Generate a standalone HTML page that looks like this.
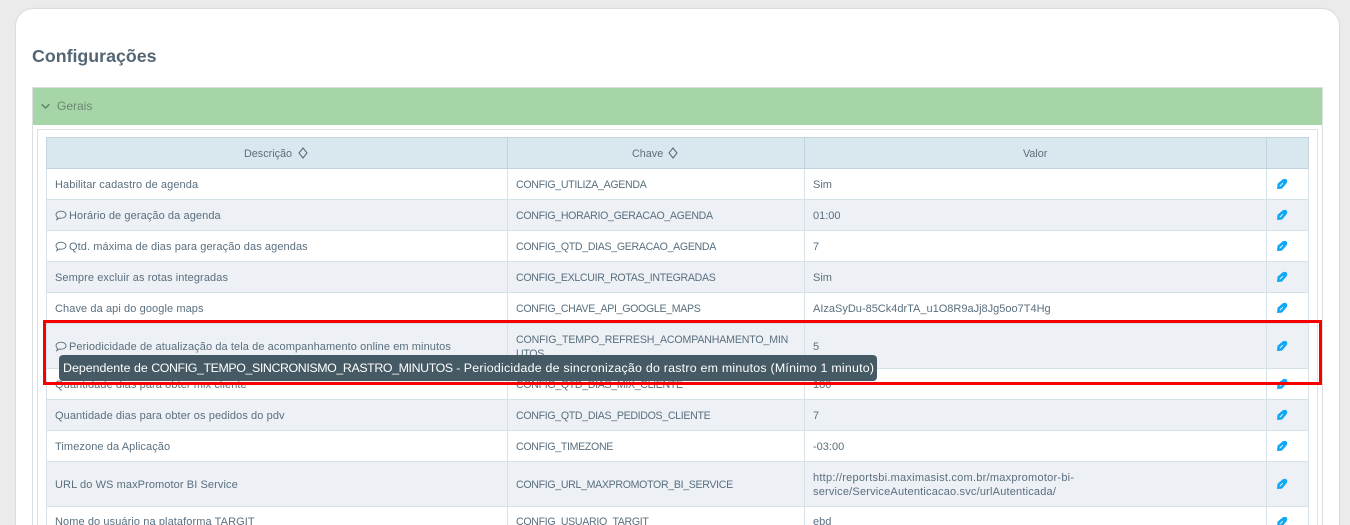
<!DOCTYPE html>
<html lang="pt-BR">
<head>
<meta charset="utf-8">
<title>Configurações</title>
<style>
html,body{margin:0;padding:0;width:1350px;height:525px;overflow:hidden;background:#ebebeb;font-family:"Liberation Sans",sans-serif;}
*{box-sizing:border-box}
#wrap{position:relative;width:1350px;height:525px;overflow:hidden;background:#ebebeb}
.card,.panel,.green,.frame,.row,.c,.red,.tip,h1{position:absolute}
.card{left:16px;top:9px;width:1323px;height:540px;background:#fff;border-radius:17px;box-shadow:0 0 2px rgba(0,0,0,.18)}
h1{left:32px;top:44px;margin:0;font-size:17.8px;line-height:25px;font-weight:700;color:#546673;white-space:nowrap}
.panel{left:32px;top:87px;width:1291px;height:460px;border:1px solid #dcdfe0;background:#fff}
.green{left:33px;top:88px;width:1289px;height:37px;background:#a6d6a7}
.green span{position:absolute;left:24px;top:10px;font-size:12px;line-height:17px;color:#6b8672}
.frame{left:37px;top:129px;width:1281px;height:420px;border:1px solid #dfe2e3;background:#fff}
.row{left:46px;width:1263px;border-left:1px solid #d6e1e8;border-right:1px solid #d6e1e8;border-bottom:1px solid #d6e1e8;background:#fff;font-size:11px;color:#5a6f7e}
.row.e{background:#edf0f5}
.row.h{background:#d9e8ef;border:1px solid #bfd5dd;color:#5d6f7c}
.row i{position:absolute;top:0;bottom:-1px;width:1px;background:#d6e1e8}
.row.h i{background:#bfd5dd;top:-1px}
.i1{left:460px}.i2{left:757px}.i3{left:1219px}
.c{white-space:nowrap;line-height:14px;margin-top:1px}
.n{letter-spacing:.09px}
.d{left:8px;letter-spacing:.09px}.k{left:469px;font-size:10.6px;letter-spacing:-.32px}.v{left:766px}
.bub{position:absolute;left:8px;width:12px;height:11px}
.pen{position:absolute;left:1229px;width:12px;height:12px}
.red{left:43px;top:320px;width:1279px;height:65px;border:3px solid #f60000;z-index:5}
.tip{left:59px;top:355px;width:818px;height:26px;background:#455a64;border-radius:4px;z-index:6;color:#fff;font-size:12.4px;line-height:26px;padding-left:4px;white-space:nowrap}
</style>
</head>
<body>
<div id="wrap">
<div class="card"></div>
<h1>Configurações</h1>
<div class="panel"></div>
<div class="green">
<svg style="position:absolute;left:8px;top:15px" width="9" height="7" viewBox="0 0 9 7"><path d="M.7 1.2 4.5 5 8.3 1.2" fill="none" stroke="#5d7f65" stroke-width="1.4"/></svg>
<span>Gerais</span>
</div>
<div class="frame"></div>

<div class="row h" style="top:137px;height:32px">
<i class="i1"></i><i class="i2"></i><i class="i3"></i>
<span class="c" style="left:197px;top:8px;font-size:10.8px">Descrição</span>
<svg style="position:absolute;left:251px;top:9px" width="10" height="12" viewBox="0 0 10 12"><path d="M5 1 9 6 5 11 1 6Z" fill="none" stroke="#5d6f7c" stroke-width="1.1"/></svg>
<span class="c" style="left:585px;top:8px;font-size:10.8px">Chave</span>
<svg style="position:absolute;left:621px;top:9px" width="10" height="12" viewBox="0 0 10 12"><path d="M5 1 9 6 5 11 1 6Z" fill="none" stroke="#5d6f7c" stroke-width="1.1"/></svg>
<span class="c" style="left:976px;top:8px;font-size:10.8px">Valor</span>
</div>

<div class="row" style="top:169px;height:31px"><i class="i1"></i><i class="i2"></i><i class="i3"></i>
<span class="c d" style="top:8px">Habilitar cadastro de agenda</span><span class="c k" style="top:8px">CONFIG_UTILIZA_AGENDA</span><span class="c v" style="top:8px">Sim</span>
<svg class="pen" style="top:9px" viewBox="0 0 12 12"><path d="M1 11 1.500 5.800 6.500 1.500C8 .5 10 .7 10.800 1.600 11.600 2.600 11.400 4.400 10.400 5.500L6 10.600Z" fill="#11a8f5"/><path d="M3.800 8.200 6.800 5.200" stroke="#fff" stroke-width=".8"/></svg></div>

<div class="row e" style="top:200px;height:31px"><i class="i1"></i><i class="i2"></i><i class="i3"></i>
<svg class="bub" style="top:10px" viewBox="0 0 12 11"><path d="M6 1.200C8.800 1.200 11 2.700 11 4.700S8.800 8.200 6 8.200C5.400 8.200 4.800 8.100 4.300 8L1.800 9.700 2.500 7.300C1.600 6.600 1 5.700 1 4.700 1 2.700 3.200 1.200 6 1.200Z" fill="none" stroke="#5a6f7e" stroke-width=".9"/></svg>
<span class="c n" style="left:22px;top:8px">Horário de geração da agenda</span><span class="c k" style="top:8px">CONFIG_HORARIO_GERACAO_AGENDA</span><span class="c v" style="top:8px">01:00</span>
<svg class="pen" style="top:9px" viewBox="0 0 12 12"><path d="M1 11 1.500 5.800 6.500 1.500C8 .5 10 .7 10.800 1.600 11.600 2.600 11.400 4.400 10.400 5.500L6 10.600Z" fill="#11a8f5"/><path d="M3.800 8.200 6.800 5.200" stroke="#fff" stroke-width=".8"/></svg></div>

<div class="row" style="top:231px;height:31px"><i class="i1"></i><i class="i2"></i><i class="i3"></i>
<svg class="bub" style="top:10px" viewBox="0 0 12 11"><path d="M6 1.200C8.800 1.200 11 2.700 11 4.700S8.800 8.200 6 8.200C5.400 8.200 4.800 8.100 4.300 8L1.800 9.700 2.500 7.300C1.600 6.600 1 5.700 1 4.700 1 2.700 3.200 1.200 6 1.200Z" fill="none" stroke="#5a6f7e" stroke-width=".9"/></svg>
<span class="c n" style="left:22px;top:8px">Qtd. máxima de dias para geração das agendas</span><span class="c k" style="top:8px">CONFIG_QTD_DIAS_GERACAO_AGENDA</span><span class="c v" style="top:8px">7</span>
<svg class="pen" style="top:9px" viewBox="0 0 12 12"><path d="M1 11 1.500 5.800 6.500 1.500C8 .5 10 .7 10.800 1.600 11.600 2.600 11.400 4.400 10.400 5.500L6 10.600Z" fill="#11a8f5"/><path d="M3.800 8.200 6.800 5.200" stroke="#fff" stroke-width=".8"/></svg></div>

<div class="row e" style="top:262px;height:31px"><i class="i1"></i><i class="i2"></i><i class="i3"></i>
<span class="c d" style="top:8px">Sempre excluir as rotas integradas</span><span class="c k" style="top:8px">CONFIG_EXLCUIR_ROTAS_INTEGRADAS</span><span class="c v" style="top:8px">Sim</span>
<svg class="pen" style="top:9px" viewBox="0 0 12 12"><path d="M1 11 1.500 5.800 6.500 1.500C8 .5 10 .7 10.800 1.600 11.600 2.600 11.400 4.400 10.400 5.500L6 10.600Z" fill="#11a8f5"/><path d="M3.800 8.200 6.800 5.200" stroke="#fff" stroke-width=".8"/></svg></div>

<div class="row" style="top:293px;height:31px"><i class="i1"></i><i class="i2"></i><i class="i3"></i>
<span class="c d" style="top:8px">Chave da api do google maps</span><span class="c k" style="top:8px">CONFIG_CHAVE_API_GOOGLE_MAPS</span><span class="c v" style="top:8px">AIzaSyDu-85Ck4drTA_u1O8R9aJj8Jg5oo7T4Hg</span>
<svg class="pen" style="top:9px" viewBox="0 0 12 12"><path d="M1 11 1.500 5.800 6.500 1.500C8 .5 10 .7 10.800 1.600 11.600 2.600 11.400 4.400 10.400 5.500L6 10.600Z" fill="#11a8f5"/><path d="M3.800 8.200 6.800 5.200" stroke="#fff" stroke-width=".8"/></svg></div>

<div class="row e" style="top:324px;height:45px"><i class="i1"></i><i class="i2"></i><i class="i3"></i>
<svg class="bub" style="top:17px" viewBox="0 0 12 11"><path d="M6 1.200C8.800 1.200 11 2.700 11 4.700S8.800 8.200 6 8.200C5.400 8.200 4.800 8.100 4.300 8L1.800 9.700 2.500 7.300C1.600 6.600 1 5.700 1 4.700 1 2.700 3.200 1.200 6 1.200Z" fill="none" stroke="#5a6f7e" stroke-width=".9"/></svg>
<span class="c n" style="left:22px;top:15px">Periodicidade de atualização da tela de acompanhamento online em minutos</span>
<span class="c k" style="top:8px;letter-spacing:-.15px">CONFIG_TEMPO_REFRESH_ACOMPANHAMENTO_MIN</span><span class="c k" style="top:22px">UTOS</span><span class="c v" style="top:15px">5</span>
<svg class="pen" style="top:16px" viewBox="0 0 12 12"><path d="M1 11 1.500 5.800 6.500 1.500C8 .5 10 .7 10.800 1.600 11.600 2.600 11.400 4.400 10.400 5.500L6 10.600Z" fill="#11a8f5"/><path d="M3.800 8.200 6.800 5.200" stroke="#fff" stroke-width=".8"/></svg></div>

<div class="row" style="top:369px;height:31px"><i class="i1"></i><i class="i2"></i><i class="i3"></i>
<span class="c d" style="top:8px">Quantidade dias para obter mix cliente</span><span class="c k" style="top:8px">CONFIG_QTD_DIAS_MIX_CLIENTE</span><span class="c v" style="top:8px">180</span>
<svg class="pen" style="top:9px" viewBox="0 0 12 12"><path d="M1 11 1.500 5.800 6.500 1.500C8 .5 10 .7 10.800 1.600 11.600 2.600 11.400 4.400 10.400 5.500L6 10.600Z" fill="#11a8f5"/><path d="M3.800 8.200 6.800 5.200" stroke="#fff" stroke-width=".8"/></svg></div>

<div class="row e" style="top:400px;height:31px"><i class="i1"></i><i class="i2"></i><i class="i3"></i>
<span class="c d" style="top:8px">Quantidade dias para obter os pedidos do pdv</span><span class="c k" style="top:8px">CONFIG_QTD_DIAS_PEDIDOS_CLIENTE</span><span class="c v" style="top:8px">7</span>
<svg class="pen" style="top:9px" viewBox="0 0 12 12"><path d="M1 11 1.500 5.800 6.500 1.500C8 .5 10 .7 10.800 1.600 11.600 2.600 11.400 4.400 10.400 5.500L6 10.600Z" fill="#11a8f5"/><path d="M3.800 8.200 6.800 5.200" stroke="#fff" stroke-width=".8"/></svg></div>

<div class="row" style="top:431px;height:31px"><i class="i1"></i><i class="i2"></i><i class="i3"></i>
<span class="c d" style="top:8px">Timezone da Aplicação</span><span class="c k" style="top:8px">CONFIG_TIMEZONE</span><span class="c v" style="top:8px">-03:00</span>
<svg class="pen" style="top:9px" viewBox="0 0 12 12"><path d="M1 11 1.500 5.800 6.500 1.500C8 .5 10 .7 10.800 1.600 11.600 2.600 11.400 4.400 10.400 5.500L6 10.600Z" fill="#11a8f5"/><path d="M3.800 8.200 6.800 5.200" stroke="#fff" stroke-width=".8"/></svg></div>

<div class="row e" style="top:462px;height:45px"><i class="i1"></i><i class="i2"></i><i class="i3"></i>
<span class="c d" style="top:15px">URL do WS maxPromotor BI Service</span><span class="c k" style="top:15px">CONFIG_URL_MAXPROMOTOR_BI_SERVICE</span>
<span class="c v" style="top:8px;letter-spacing:.25px">http://reportsbi.maximasist.com.br/maxpromotor-bi-</span><span class="c v" style="top:22px;letter-spacing:.19px">service/ServiceAutenticacao.svc/urlAutenticada/</span>
<svg class="pen" style="top:16px" viewBox="0 0 12 12"><path d="M1 11 1.500 5.800 6.500 1.500C8 .5 10 .7 10.800 1.600 11.600 2.600 11.400 4.400 10.400 5.500L6 10.600Z" fill="#11a8f5"/><path d="M3.800 8.200 6.800 5.200" stroke="#fff" stroke-width=".8"/></svg></div>

<div class="row" style="top:507px;height:31px"><i class="i1"></i><i class="i2"></i><i class="i3"></i>
<span class="c d" style="top:7px">Nome do usuário na plataforma TARGIT</span><span class="c k" style="top:7px">CONFIG_USUARIO_TARGIT</span><span class="c v" style="top:7px">ebd</span>
<svg class="pen" style="top:9px" viewBox="0 0 12 12"><path d="M1 11 1.500 5.800 6.500 1.500C8 .5 10 .7 10.800 1.600 11.600 2.600 11.400 4.400 10.400 5.500L6 10.600Z" fill="#11a8f5"/><path d="M3.800 8.200 6.800 5.200" stroke="#fff" stroke-width=".8"/></svg></div>

<div class="red"></div>
<div class="tip">Dependente de <span style="letter-spacing:-.4px">CONFIG_TEMPO_SINCRONISMO_RASTRO_MINUTOS</span> - <span style="letter-spacing:.23px">Periodicidade de sincronização do rastro em minutos (Mínimo 1 minuto)</span></div>
</div>
</body>
</html>
